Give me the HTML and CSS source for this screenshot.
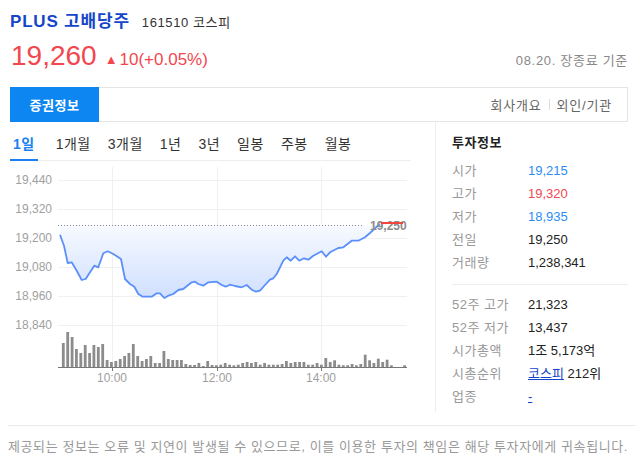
FILE: index.html
```html
<!DOCTYPE html>
<html lang="ko">

<head>
  <meta charset="UTF-8">
  <meta name="viewport" content="width=device-width, initial-scale=1.0">
  <title>PLUS 고배당주 - 증권정보</title>
  <link rel="stylesheet" href="styles.css">
</head>

<body>
  <div class="stock">
    <div class="title-row">
      <span class="name">PLUS 고배당주</span>
      <span class="code">161510 코스피</span>
    </div>

    <div class="price-row">
      <span class="price">19,260</span>
      <span class="change"><span class="arrow">▲</span>10(+0.05%)</span>
      <span class="date">08.20. 장종료 기준</span>
    </div>

    <div class="tabbar">
      <a class="tab active">증권정보</a>
      <div class="tab-links">
        <a>회사개요</a>
        <span class="sep"></span>
        <a>외인/기관</a>
      </div>
    </div>

    <div class="content">
      <div class="chart-col">
        <div class="periods">
          <a class="period active">1일</a>
          <a class="period">1개월</a>
          <a class="period">3개월</a>
          <a class="period">1년</a>
          <a class="period">3년</a>
          <a class="period">일봉</a>
          <a class="period">주봉</a>
          <a class="period">월봉</a>
        </div>

        <svg class="chart" width="410" height="230" viewBox="10 162 410 230">
          <defs>
            <linearGradient id="area" x1="0" y1="226" x2="0" y2="300" gradientUnits="userSpaceOnUse">
              <stop offset="0" stop-color="#f7faff" />
              <stop offset="1" stop-color="#cfdfff" />
            </linearGradient>
          </defs>

          <!-- grid -->
          <g stroke="#f0f0f0" stroke-width="1">
            <line x1="58" y1="181.5" x2="407" y2="181.5" />
            <line x1="58" y1="210.5" x2="407" y2="210.5" />
            <line x1="58" y1="239.5" x2="407" y2="239.5" />
            <line x1="58" y1="268.5" x2="407" y2="268.5" />
            <line x1="58" y1="297.5" x2="407" y2="297.5" />
            <line x1="58" y1="326.5" x2="407" y2="326.5" />
            <line x1="112.5" y1="168" x2="112.5" y2="368" />
            <line x1="217.5" y1="168" x2="217.5" y2="368" />
            <line x1="321.5" y1="168" x2="321.5" y2="368" />
          </g>

          <g class="axis-y" text-anchor="end">
            <text x="52" y="185">19,440</text>
            <text x="52" y="214">19,320</text>
            <text x="52" y="243">19,200</text>
            <text x="52" y="272">19,080</text>
            <text x="52" y="301">18,960</text>
            <text x="52" y="330">18,840</text>
          </g>

          <!-- price -->
          <polygon fill="url(#area)" points="60,235.7 64,246.7 67.7,264 71.7,263.3 76.7,271.7 81.7,281 85.7,280 90,273.3 94.3,266.7 98.3,268.3 103.3,254.3 107.7,252.3 113.3,255 121,260 125,280 130,285 134.3,287.7 138.3,295 142.7,297.7 151.7,297.7 156.7,294.3 160,294.3 164.3,299 168.3,296.7 173.3,295 178.3,291 183.3,290 191.7,283.3 195,282.7 198.3,285 203.3,286.7 208.3,283.3 216.7,282.7 221.7,286 225.7,287.7 230,285.7 235,287 241.7,288.3 246.7,286 251.7,290.7 256,292.7 260,291.7 265,286 270,280.7 273.3,279.3 276.7,275 280,268.3 283.3,261.7 286.7,258.3 290.7,261.7 295,257.3 299.3,261.7 304,259.3 308.3,260.7 313.3,256.7 321.7,252.3 326,257.7 330,253.3 338.3,249 343.3,248.3 351.7,241.7 358.3,241.7 365,238.3 370,234 375,229.3 380,226 60,226" />
          <line x1="58" y1="226.5" x2="364" y2="226.5" stroke="#8a8a8a" stroke-dasharray="1 2" />
          <polyline fill="none" stroke="#5b8ff9" stroke-width="1.8" stroke-linejoin="round" points="60,235.7 64,246.7 67.7,264 71.7,263.3 76.7,271.7 81.7,281 85.7,280 90,273.3 94.3,266.7 98.3,268.3 103.3,254.3 107.7,252.3 113.3,255 121,260 125,280 130,285 134.3,287.7 138.3,295 142.7,297.7 151.7,297.7 156.7,294.3 160,294.3 164.3,299 168.3,296.7 173.3,295 178.3,291 183.3,290 191.7,283.3 195,282.7 198.3,285 203.3,286.7 208.3,283.3 216.7,282.7 221.7,286 225.7,287.7 230,285.7 235,287 241.7,288.3 246.7,286 251.7,290.7 256,292.7 260,291.7 265,286 270,280.7 273.3,279.3 276.7,275 280,268.3 283.3,261.7 286.7,258.3 290.7,261.7 295,257.3 299.3,261.7 304,259.3 308.3,260.7 313.3,256.7 321.7,252.3 326,257.7 330,253.3 338.3,249 343.3,248.3 351.7,241.7 358.3,241.7 365,238.3 370,234 375,229.3 380,225" />
          <text class="prev-label" x="370" y="230.5">19,250</text>
          <line x1="381" y1="224" x2="403" y2="224" stroke="#f2453d" stroke-width="2" />

          <!-- volume -->
          <g fill="#8c8c8c">
            <rect x="61.9" y="344" width="2.8" height="24" />
            <rect x="66.3" y="333" width="2.8" height="35" />
            <rect x="70.7" y="338" width="2.8" height="30" />
            <rect x="75.0" y="350" width="2.8" height="18" />
            <rect x="79.4" y="354" width="2.8" height="14" />
            <rect x="83.8" y="346" width="2.8" height="22" />
            <rect x="88.2" y="354" width="2.8" height="14" />
            <rect x="92.5" y="346" width="2.8" height="22" />
            <rect x="96.9" y="348" width="2.8" height="20" />
            <rect x="101.3" y="345" width="2.8" height="23" />
            <rect x="105.7" y="361" width="2.8" height="7" />
            <rect x="110.0" y="363" width="2.8" height="5" />
            <rect x="114.4" y="362" width="2.8" height="6" />
            <rect x="118.8" y="360" width="2.8" height="8" />
            <rect x="123.2" y="357" width="2.8" height="11" />
            <rect x="127.5" y="354" width="2.8" height="14" />
            <rect x="131.9" y="345" width="2.8" height="23" />
            <rect x="136.3" y="357" width="2.8" height="11" />
            <rect x="140.7" y="362" width="2.8" height="6" />
            <rect x="145.0" y="360" width="2.8" height="8" />
            <rect x="149.4" y="357" width="2.8" height="11" />
            <rect x="153.8" y="364" width="2.8" height="4" />
            <rect x="158.2" y="364" width="2.8" height="4" />
            <rect x="162.5" y="352" width="2.8" height="16" />
            <rect x="166.9" y="360" width="2.8" height="8" />
            <rect x="171.3" y="361" width="2.8" height="7" />
            <rect x="175.7" y="361" width="2.8" height="7" />
            <rect x="180.0" y="361" width="2.8" height="7" />
            <rect x="184.4" y="365" width="2.8" height="3" />
            <rect x="188.8" y="366" width="2.8" height="2" />
            <rect x="193.2" y="366" width="2.8" height="2" />
            <rect x="197.5" y="364" width="2.8" height="4" />
            <rect x="201.9" y="367" width="2.8" height="1" />
            <rect x="206.3" y="362" width="2.8" height="6" />
            <rect x="210.7" y="366" width="2.8" height="2" />
            <rect x="215.0" y="366.3" width="2.8" height="1.7" />
            <rect x="219.4" y="365.7" width="2.8" height="2.3" />
            <rect x="223.8" y="364" width="2.8" height="4" />
            <rect x="228.2" y="365.7" width="2.8" height="2.3" />
            <rect x="232.5" y="366.3" width="2.8" height="1.7" />
            <rect x="236.9" y="365.7" width="2.8" height="2.3" />
            <rect x="241.3" y="364" width="2.8" height="4" />
            <rect x="245.7" y="363" width="2.8" height="5" />
            <rect x="250.0" y="364" width="2.8" height="4" />
            <rect x="254.4" y="363" width="2.8" height="5" />
            <rect x="258.8" y="365.7" width="2.8" height="2.3" />
            <rect x="263.2" y="364" width="2.8" height="4" />
            <rect x="267.5" y="365.7" width="2.8" height="2.3" />
            <rect x="271.9" y="365.7" width="2.8" height="2.3" />
            <rect x="276.3" y="365.7" width="2.8" height="2.3" />
            <rect x="280.7" y="365" width="2.8" height="3" />
            <rect x="285.0" y="362" width="2.8" height="6" />
            <rect x="289.4" y="364" width="2.8" height="4" />
            <rect x="293.8" y="363" width="2.8" height="5" />
            <rect x="298.2" y="363" width="2.8" height="5" />
            <rect x="302.5" y="363" width="2.8" height="5" />
            <rect x="306.9" y="365.7" width="2.8" height="2.3" />
            <rect x="311.3" y="365.7" width="2.8" height="2.3" />
            <rect x="315.7" y="364" width="2.8" height="4" />
            <rect x="320.0" y="365.7" width="2.8" height="2.3" />
            <rect x="324.4" y="359" width="2.8" height="9" />
            <rect x="328.8" y="363" width="2.8" height="5" />
            <rect x="333.2" y="361.3" width="2.8" height="6.7" />
            <rect x="337.5" y="365.7" width="2.8" height="2.3" />
            <rect x="341.9" y="366.3" width="2.8" height="1.7" />
            <rect x="346.3" y="366.3" width="2.8" height="1.7" />
            <rect x="350.7" y="365" width="2.8" height="3" />
            <rect x="355.0" y="366.3" width="2.8" height="1.7" />
            <rect x="359.4" y="365" width="2.8" height="3" />
            <rect x="363.8" y="355.7" width="2.8" height="12.3" />
            <rect x="368.2" y="361.3" width="2.8" height="6.7" />
            <rect x="372.5" y="364" width="2.8" height="4" />
            <rect x="376.9" y="359.7" width="2.8" height="8.3" />
            <rect x="381.3" y="363" width="2.8" height="5" />
            <rect x="385.7" y="360.7" width="2.8" height="7.3" />
            <rect x="390.0" y="366.3" width="2.8" height="1.7" />
            <rect x="403.2" y="366.3" width="2.8" height="1.7" />
          </g>
          <g stroke="#777" stroke-width="1">
            <line x1="58" y1="368.5" x2="407" y2="368.5" />
            <line x1="112.5" y1="368" x2="112.5" y2="372" />
            <line x1="217.5" y1="368" x2="217.5" y2="372" />
            <line x1="321.5" y1="368" x2="321.5" y2="372" />
          </g>
          <g class="axis-x" text-anchor="middle">
            <text x="112" y="383">10:00</text>
            <text x="217" y="383">12:00</text>
            <text x="321" y="383">14:00</text>
          </g>
        </svg>
      </div>

      <div class="info-col">
        <h4>투자정보</h4>
        <dl class="info-list">
          <dt>시가</dt><dd class="down">19,215</dd>
          <dt>고가</dt><dd class="up">19,320</dd>
          <dt>저가</dt><dd class="down">18,935</dd>
          <dt>전일</dt><dd>19,250</dd>
          <dt>거래량</dt><dd>1,238,341</dd>
        </dl>
        <dl class="info-list second">
          <dt>52주 고가</dt><dd>21,323</dd>
          <dt>52주 저가</dt><dd>13,437</dd>
          <dt>시가총액</dt><dd>1조 5,173억</dd>
          <dt>시총순위</dt><dd><a class="link">코스피</a> 212위</dd>
          <dt>업종</dt><dd><a class="link">-</a></dd>
        </dl>
      </div>
    </div>
  </div>

  <p class="notice">제공되는 정보는 오류 및 지연이 발생될 수 있으므로, 이를 이용한 투자의 책임은 해당 투자자에게 귀속됩니다.</p>
</body>

</html>
```

FILE: styles.css
```css
body {
  margin: 0;
  font-family: "Liberation Sans", "Noto Sans CJK KR", sans-serif;
  color: #222;
  background: #fff;
}

a {
  cursor: pointer;
}

.stock {
  padding: 0 16px 0 10px;
}

.title-row {
  display: flex;
  align-items: baseline;
  gap: 12px;
  padding-top: 7px;
  height: 24px;
}

.name {
  font-size: 17px;
  font-weight: bold;
  color: #1546c9;
  letter-spacing: 0.8px;
}

.code {
  font-size: 13px;
  color: #333;
  letter-spacing: 0.6px;
}

.price-row {
  display: flex;
  align-items: baseline;
  margin-top: 9px;
  height: 36px;
}

.price {
  font-size: 28px;
  color: #f2474f;
  margin-left: 1px;
}

.change {
  font-size: 17px;
  color: #f2474f;
  margin-left: 8px;
}

.arrow {
  font-size: 13px;
  margin-right: 2px;
  position: relative;
  top: -1px;
}

.date {
  margin-left: auto;
  font-size: 13px;
  color: #888;
  letter-spacing: 0.7px;
}

.tabbar {
  display: flex;
  align-items: center;
  height: 33px;
  margin-top: 11px;
  border-top: 1px solid #e5e5e5;
  border-bottom: 1px solid #e5e5e5;
  border-right: 1px solid #e5e5e5;
}

.tab.active {
  width: 89px;
  height: 35px;
  margin: -1px 0;
  background: #0e86f2;
  color: #fff;
  font-size: 13px;
  font-weight: bold;
  letter-spacing: 0.6px;
  display: flex;
  align-items: center;
  justify-content: center;
}

.tab-links {
  margin-left: auto;
  display: flex;
  align-items: center;
  gap: 7px;
  padding-right: 15px;
  font-size: 13px;
  color: #666;
  letter-spacing: 0.8px;
}

.tab-links .sep {
  width: 1px;
  height: 11px;
  background: #ddd;
}

.content {
  display: flex;
}

.chart-col {
  width: 425px;
  border-right: 1px solid #eee;
}

.periods {
  display: flex;
  gap: 11px;
  width: 401px;
  padding-top: 12px;
  border-bottom: 1px solid #eee;
}

.period {
  font-size: 14px;
  line-height: 20px;
  padding: 0 3px 5px;
  color: #333;
  letter-spacing: 0.5px;
}

.period.active {
  color: #1a7ff0;
  font-weight: bold;
  border-bottom: 2px solid #1a7ff0;
  margin-bottom: -1px;
  margin-right: 4px;
}

.chart {
  display: block;
}

.axis-y text,
.axis-x text {
  font-size: 12px;
  fill: #a0a0a0;
}

.prev-label {
  font-size: 12px;
  font-weight: bold;
  fill: #8c8c8c;
}

.info-col {
  flex: 1;
  padding: 10px 0 4px 16px;
}

.info-col h4 {
  margin: 0;
  font-size: 13px;
  line-height: 22px;
  color: #222;
  letter-spacing: 0.5px;
}

.info-list {
  display: grid;
  grid-template-columns: 76px 1fr;
  margin: 5px 0 0;
  font-size: 13px;
  line-height: 23px;
}

.info-list dt {
  color: #999;
  letter-spacing: 0.5px;
}

.info-list dd {
  margin: 0;
  color: #222;
}

.info-list.second {
  margin-top: 10px;
  padding-top: 8px;
  border-top: 1px solid #eee;
}

.info-list dd.up {
  color: #f2474f;
}

.info-list dd.down {
  color: #2a8cf5;
}

.link {
  color: #1546c9;
  text-decoration: underline;
}

.notice {
  margin: 13px 8px 0;
  padding-top: 10px;
  border-top: 1px solid #ebebeb;
  font-size: 13px;
  color: #999;
  letter-spacing: 0.6px;
}
```
